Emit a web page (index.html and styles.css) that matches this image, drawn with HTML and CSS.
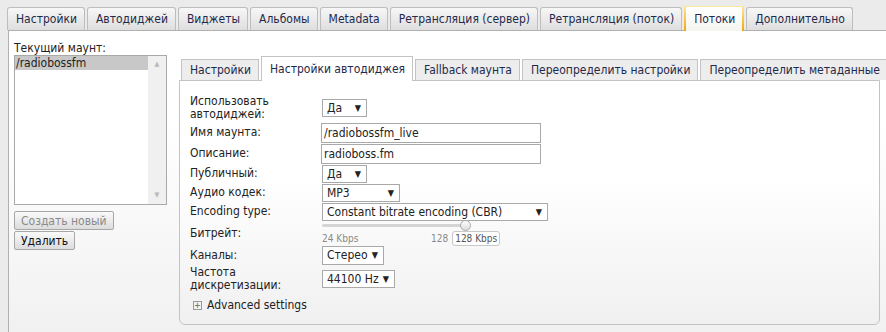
FILE: index.html
```html
<!DOCTYPE html>
<html lang="ru">

<head>
    <meta charset="UTF-8">
    <title>Потоки</title>
    <link rel="stylesheet" href="styles.css">
</head>

<body>
    <div class="tabs">
        <div class="tab">Настройки</div>
        <div class="tab">Автодиджей</div>
        <div class="tab">Виджеты</div>
        <div class="tab">Альбомы</div>
        <div class="tab">Metadata</div>
        <div class="tab">Ретрансляция (сервер)</div>
        <div class="tab">Ретрансляция (поток)</div>
        <div class="tab active">Потоки</div>
        <div class="tab">Дополнительно</div>
    </div>

    <div class="panel">
        <div class="mounts">
            <div class="mounts-title">Текущий маунт:</div>
            <div class="listbox">
                <div class="list-items">
                    <div class="list-item selected">/radiobossfm</div>
                </div>
                <div class="scrollbar">
                    <span>&#9650;</span>
                    <span>&#9660;</span>
                </div>
            </div>
            <div class="btn disabled">Создать новый</div>
            <div class="btn">Удалить</div>
        </div>

        <div class="settings">
            <div class="subtabs">
                <div class="subtab">Настройки</div>
                <div class="subtab active">Настройки автодиджея</div>
                <div class="subtab">Fallback маунта</div>
                <div class="subtab">Переопределить настройки</div>
                <div class="subtab">Переопределить метаданные</div>
            </div>
            <div class="subpanel">
                <div class="row r-tall">
                    <div class="label">Использовать<br>автодиджей:</div>
                    <div class="select w-yes">Да <i>&#9660;</i></div>
                </div>
                <div class="row r-input">
                    <div class="label">Имя маунта:</div>
                    <div class="input">/radiobossfm_live</div>
                </div>
                <div class="row r-input">
                    <div class="label">Описание:</div>
                    <div class="input">radioboss.fm</div>
                </div>
                <div class="row r-sel">
                    <div class="label">Публичный:</div>
                    <div class="select w-yes">Да <i>&#9660;</i></div>
                </div>
                <div class="row r-sel">
                    <div class="label">Аудио кодек:</div>
                    <div class="select w-codec">MP3 <i>&#9660;</i></div>
                </div>
                <div class="row r-sel">
                    <div class="label">Encoding type:</div>
                    <div class="select w-enc">Constant bitrate encoding (CBR) <i>&#9660;</i></div>
                </div>
                <div class="row r-slider">
                    <div class="label">Битрейт:</div>
                    <div class="slider">
                        <div class="track"><span class="knob"></span></div>
                        <div class="slider-labels">
                            <span class="min">24 Kbps</span>
                            <span class="cur">128</span>
                            <span class="value">128 Kbps</span>
                        </div>
                    </div>
                </div>
                <div class="row r-ch">
                    <div class="label">Каналы:</div>
                    <div class="select w-ch">Стерео <i>&#9660;</i></div>
                </div>
                <div class="row r-tall2">
                    <div class="label">Частота<br>дискретизации:</div>
                    <div class="select w-hz">44100 Hz <i>&#9660;</i></div>
                </div>
                <div class="advanced">
                    <span class="plus">+</span> Advanced settings
                </div>
            </div>
        </div>
    </div>
</body>

</html>
```

FILE: styles.css
```css
body {
    margin: 0;
    padding: 0;
    background: #ebebeb;
    font-family: "DejaVu Sans Condensed", "DejaVu Sans", sans-serif;
    font-size: 12px;
    color: #222;
    overflow: hidden;
}

.tabs {
    display: flex;
    gap: 2px;
    padding: 7px 0 0 7px;
    height: 30px;
    box-sizing: border-box;
    align-items: flex-end;
}

.tab {
    height: 23px;
    line-height: 22px;
    padding: 0 7px 0 8px;
    box-sizing: border-box;
    border: 1px solid #bdbdbd;
    border-bottom: none;
    border-radius: 3px 3px 0 0;
    background: linear-gradient(180deg, #f7f7f7, #dedede);
    color: #1f2a4a;
    white-space: nowrap;
}

.tab.active {
    height: 25px;
    line-height: 24px;
    margin-bottom: -1px;
    background: linear-gradient(180deg, #ffffff, #f4f4f0);
    border-left: 2px solid #f2c200;
    border-right: 2px solid #f2c200;
    border-top: 1px solid #e7d58a;
    border-image: linear-gradient(180deg, #fbe89a, #f4a400) 1;
    border-bottom: none;
}

.panel {
    display: flex;
    margin-left: 8px;
    height: 302px;
    border-top: 1px solid #b0b0b0;
    border-left: 1px solid #b0b0b0;
    background: linear-gradient(180deg, #ffffff 30%, #f1f1f1);
}

.mounts {
    width: 159px;
    padding: 11px 0 0 5px;
}

.mounts-title {
    line-height: 13px;
    margin-bottom: 0;
}

.listbox {
    display: flex;
    width: 153px;
    height: 150px;
    border: 1px solid #a9a9a9;
    box-sizing: border-box;
    background: #fff;
    margin-bottom: 6px;
}

.list-items {
    flex: 1;
}

.list-item {
    height: 14px;
    line-height: 14px;
    padding-left: 1px;
}

.list-item.selected {
    background: #c8c8c8;
}

.scrollbar {
    width: 18px;
    background: #f0f0f0;
    display: flex;
    flex-direction: column;
    justify-content: space-between;
    align-items: center;
    font-size: 7px;
    color: #b8b8b8;
    padding: 4px 0 5px;
    box-sizing: border-box;
}

.btn {
    display: inline-block;
    height: 19px;
    line-height: 18px;
    padding: 0 6px;
    box-sizing: border-box;
    border: 1px solid #a7a7a7;
    background: linear-gradient(180deg, #fafafa, #dcdcdc);
    border-radius: 2px;
    margin-bottom: 1px;
    color: #111;
}

.btn.disabled {
    color: #8a8a8a;
}

.settings {
    padding-top: 25px;
    margin-left: 6px;
    width: 701px;
}

.subtabs {
    display: flex;
    gap: 2px;
    padding-left: 2px;
    align-items: flex-end;
    height: 24px;
}

.subtab {
    height: 21px;
    line-height: 20px;
    padding: 0 7px 0 8px;
    box-sizing: border-box;
    border: 1px solid #c3c3c3;
    border-bottom: none;
    background: #ededed;
    color: #1f2a4a;
    white-space: nowrap;
}

.subtab.active {
    height: 25px;
    line-height: 24px;
    margin-bottom: -1px;
    background: #fff;
    position: relative;
}

.subpanel {
    height: 245px;
    box-sizing: border-box;
    border: 1px solid #c3c3c3;
    border-radius: 0 0 6px 6px;
    background: linear-gradient(180deg, #ffffff 40%, #f0f0f0);
    padding: 12px 0 0 10px;
}

.row {
    display: flex;
    align-items: center;
}

.label {
    width: 132px;
    line-height: 13px;
    flex-shrink: 0;
}

.r-tall { height: 29px; }
.r-input { height: 21px; }
.r-sel { height: 19px; }
.r-slider { height: 24px; }
.r-ch { height: 20px; }
.r-tall2 { height: 28px; }

.input {
    width: 220px;
    height: 20px;
    line-height: 18px;
    border: 1px solid #a9a9a9;
    box-sizing: border-box;
    background: #fff;
    padding: 0 2px;
    margin-left: -1px;
}

.select {
    display: flex;
    justify-content: space-between;
    align-items: center;
    height: 18px;
    box-sizing: border-box;
    border: 1px solid #a9a9a9;
    background: #fff;
    padding: 0 5px 0 4px;
}

.select i {
    font-style: normal;
    font-size: 9px;
}

.w-yes { width: 45px; }
.w-codec { width: 78px; }
.w-enc { width: 226px; }
.w-ch { width: 62px; height: 19px; }
.w-hz { width: 73px; }

.slider {
    width: 180px;
    align-self: flex-start;
    padding-top: 3px;
}

.track {
    position: relative;
    width: 144px;
    height: 3px;
    background: #d5d5d5;
    border-radius: 2px;
}

.knob {
    position: absolute;
    right: -5px;
    top: -4px;
    width: 9px;
    height: 9px;
    border-radius: 50%;
    border: 1px solid #a9a9a9;
    background: linear-gradient(180deg, #fdfdfd, #dcdcdc);
}

.slider-labels {
    display: flex;
    align-items: center;
    font-size: 10px;
    color: #8a8a8a;
    margin-top: 4px;
}

.slider-labels .min {
    width: 109px;
}

.slider-labels .cur {
    margin-right: 4px;
}

.slider-labels .value {
    border: 1px solid #c8c8c8;
    border-radius: 3px;
    padding: 1px 2px;
    background: #fff;
    color: #555;
}

.advanced {
    display: flex;
    align-items: center;
    gap: 5px;
    margin: 4px 0 0 3px;
    height: 16px;
}

.plus {
    width: 7px;
    height: 7px;
    border: 1px solid #999;
    font-size: 9px;
    line-height: 7px;
    text-align: center;
    color: #666;
}
```
